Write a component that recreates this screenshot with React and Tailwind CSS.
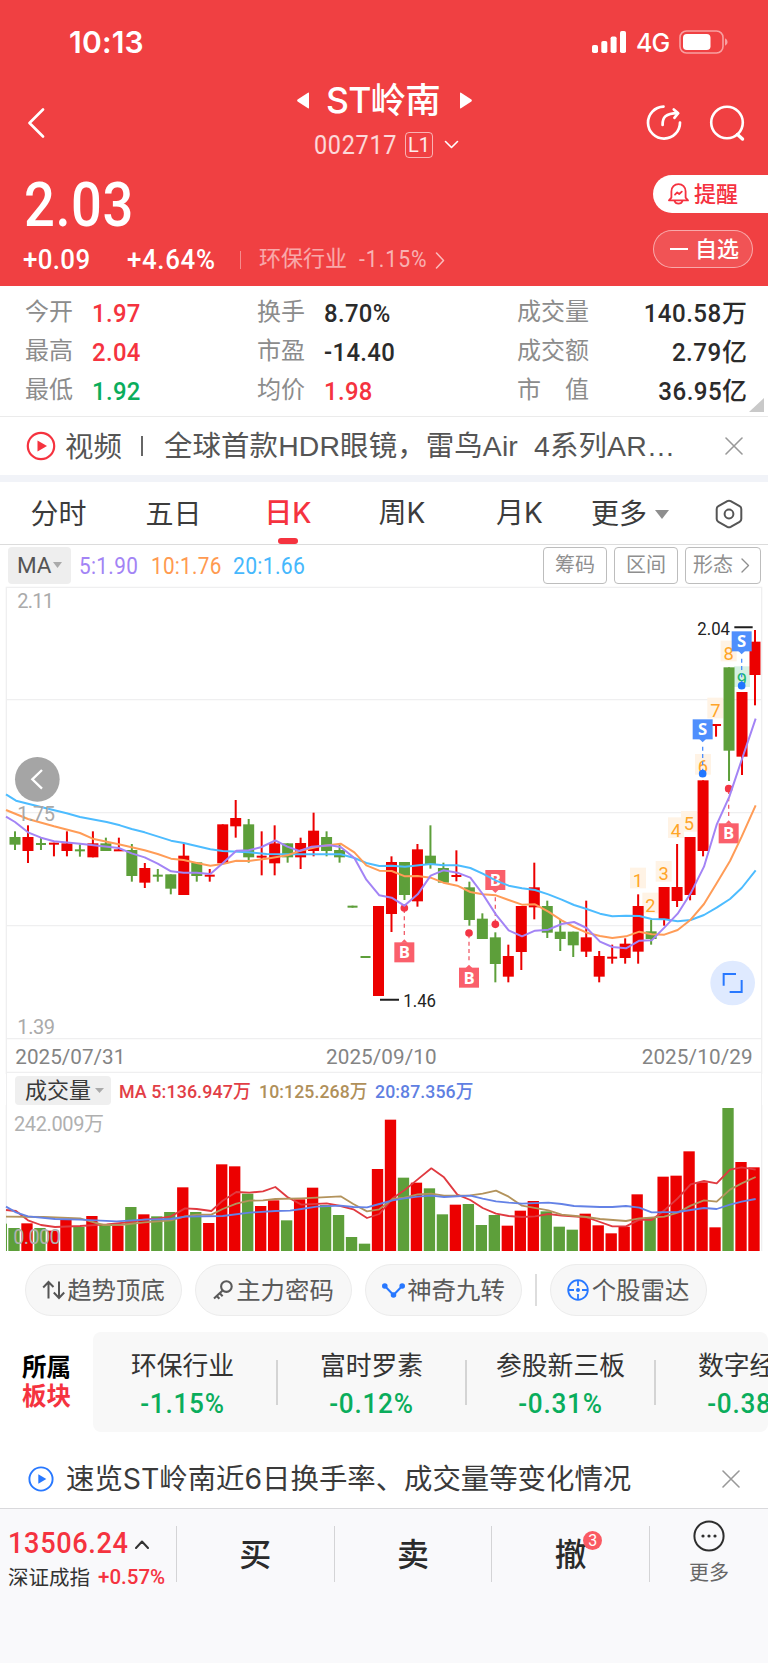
import React from "react";

const NUM = "font-['Roboto','Noto_Sans_CJK_SC',sans-serif]";
const RED = "#ec0000";
const GREEN = "#5d9f3a";

// [color, bodyTop, bodyBottom, high, low]
const CANDLES = [
  ["G", 171, 194, 154, 210], ["R", 171, 213, 136, 249], ["G", 189, 193, 172, 210], ["R", 188, 192, 188, 229],
  ["R", 190, 213, 154, 229], ["G", 208, 212, 193, 230], ["R", 190, 232, 154, 232], ["G", 190, 213, 173, 213],
  ["R", 208, 212, 173, 212], ["G", 210, 288, 192, 305], ["R", 264, 308, 249, 324], ["G", 284, 288, 267, 305],
  ["G", 283, 326, 283, 343], ["R", 227, 345, 192, 345], ["G", 247, 288, 247, 305], ["R", 284, 288, 267, 305],
  ["R", 133, 250, 133, 250], ["R", 114, 139, 60, 173], ["G", 133, 232, 117, 248], ["R", 227, 231, 154, 286],
  ["R", 190, 250, 136, 286], ["G", 190, 232, 190, 248], ["R", 189, 232, 173, 267], ["R", 152, 213, 98, 229],
  ["G", 171, 213, 154, 229], ["G", 210, 232, 193, 248], ["G", 377, 383, 377, 383], ["G", 528, 534, 528, 534],
  ["R", 378, 648, 378, 648], ["R", 246, 402, 229, 456], ["G", 246, 345, 246, 360], ["R", 208, 364, 192, 380],
  ["G", 227, 252, 136, 266], ["G", 264, 308, 248, 308], ["R", 285, 289, 211, 304], ["G", 322, 420, 305, 437],
  ["G", 416, 477, 400, 477], ["G", 472, 552, 457, 607], ["R", 528, 590, 494, 607], ["R", 378, 516, 378, 570],
  ["R", 322, 382, 248, 418], ["G", 378, 458, 362, 474], ["G", 455, 477, 418, 513], ["G", 455, 496, 455, 531],
  ["R", 472, 515, 362, 531], ["R", 528, 590, 513, 607], ["R", 530, 534, 494, 551], ["R", 491, 534, 475, 551],
  ["R", 378, 515, 343, 551], ["G", 454, 477, 419, 494], ["R", 321, 418, 321, 437], ["R", 321, 363, 192, 381],
  ["R", 171, 345, 171, 361], ["R", 1, 213, 1, 229], ["R", -168, -164, -168, -130], ["G", -338, -88, -338, 3],
  ["R", -264, -70, -264, -15], ["R", -415, -315, -450, -224],
];

const VOLUMES = [
  474, 460, 474, 482, 449, 471, 438, 464, 467, 411, 433, 439, 426, 352, 426, 459, 283, 289, 371, 408, 391, 451, 388,
  353, 405, 435, 501, 521, 297, 149, 323, 338, 355, 433, 404, 402, 465, 435, 467, 422, 393, 424, 470, 479, 431, 466,
  490, 470, 373, 442, 320, 317, 244, 337, 472, 114, 276, 292,
];

const MA5 =
  "18,110 45,126 84,157 123,173 162,184 240,191 356,204 395,220 434,232 473,251 513,274 551,278 590,278 631,282 668,250 709,212 746,211 785,201 826,181 862,200 898,213 935,200 990,196 1022,201 1063,234 1099,299 1138,346 1175,353 1213,377 1253,343 1292,287 1330,271 1372,278 1411,293 1448,342 1488,404 1526,451 1566,469 1605,452 1645,449 1685,432 1722,426 1760,444 1800,485 1837,501 1878,505 1918,482 1955,481 1993,443 2033,401 2072,340 2112,260 2150,134 2188,50 2225,-60 2267,-184";
const MA10 =
  "18,90 84,117 162,139 240,159 278,176 356,193 434,211 473,222 513,236 551,240 590,249 631,257 668,252 709,242 746,243 800,236 862,226 898,213 960,199 1022,191 1063,217 1099,256 1138,272 1175,273 1215,289 1253,288 1292,293 1330,308 1372,317 1411,336 1448,343 1488,346 1526,360 1566,374 1605,373 1645,395 1685,421 1722,441 1760,458 1800,468 1837,474 1878,469 1918,455 1955,463 1993,464 2033,450 2072,419 2112,372 2150,310 2190,243 2225,170 2267,76";
const MA20 =
  "18,43 48,62 84,71 123,81 200,100 240,111 320,126 360,136 395,147 434,157 513,182 551,189 631,208 668,213 746,217 800,222 862,223 940,223 1022,223 1063,234 1099,249 1138,258 1175,257 1215,260 1292,252 1330,256 1372,256 1411,264 1448,281 1488,302 1526,317 1566,325 1605,330 1645,343 1685,359 1722,375 1760,387 1800,401 1837,409 1878,407 1918,408 1955,417 1993,418 2033,424 2072,420 2112,405 2150,383 2190,357 2225,324 2267,271";
const V5 =
  "18,420 48,423 84,451 123,465 165,471 240,468 320,463 395,456 434,448 473,446 513,439 555,415 590,417 634,423 668,392 709,366 748,368 789,364 826,351 862,381 904,404 980,400 1022,408 1060,418 1101,444 1138,432 1178,385 1213,361 1253,328 1294,295 1332,322 1372,374 1411,390 1448,414 1488,431 1526,438 1566,441 1605,439 1645,432 1685,437 1760,442 1800,456 1837,469 1878,469 1918,449 1955,450 1993,421 2033,385 2072,343 2112,333 2150,340 2190,299 2225,292 2267,299";
const V10 =
  "18,440 130,441 240,445 310,465 360,465 434,457 513,451 555,439 590,434 634,434 668,417 709,401 748,392 789,391 826,387 904,385 950,383 1022,379 1060,402 1101,424 1138,418 1178,387 1213,383 1253,373 1294,371 1332,377 1411,376 1448,371 1488,362 1526,380 1566,407 1645,421 1685,434 1760,441 1800,447 1878,453 1918,445 1993,440 2033,428 2072,407 2112,391 2150,395 2190,359 2225,340 2267,321";
const V20 =
  "18,410 48,427 84,439 165,447 240,449 350,454 434,449 513,447 555,440 668,438 748,428 826,423 870,422 904,417 950,410 1022,407 1060,411 1101,412 1138,402 1178,391 1213,385 1253,380 1294,377 1332,381 1411,377 1448,386 1488,394 1526,398 1566,401 1645,398 1685,402 1722,408 1800,411 1837,411 1878,408 1918,413 1955,427 2033,426 2072,420 2112,414 2150,417 2190,404 2225,395 2267,387";

const TURNS = [
  ["1", 1914, 294], ["2", 1951, 369], ["3", 1991, 274], ["4", 2028, 143], ["5", 2067, 124],
  ["6", 2109, -47], ["7", 2146, -216], ["8", 2186, -387], ["9", 2226, -310],
];

// x, box centre y, anchor dot y, label
const MARKS = [
  [1213, 517, 384, "B"], [1407, 593, 459, "B"], [1486, 300, 433, "B"],
  [2186, 160, 26, "B"], [2108, -152, -19, "S"], [2225, -416, -283, "S"],
];

function Tri({ className, d = "M0 0H10L5 8Z", viewBox = "0 0 10 8" }) {
  return (
    <svg className={className} viewBox={viewBox} preserveAspectRatio="none" fill="currentColor">
      <path d={d} />
    </svg>
  );
}

function Line({ className, d, viewBox, w = 2 }) {
  return (
    <svg className={className} viewBox={viewBox} fill="none" stroke="currentColor" strokeWidth={w} strokeLinecap="round" strokeLinejoin="round">
      <path d={d} />
    </svg>
  );
}

function Mark({ x, y, dot, label }) {
  const sell = label === "S";
  const s = dot > y ? 1 : -1;
  const fill = sell ? "#4f8ffd" : "#fa5f6b";
  return (
    <g>
      <line x1={x} x2={x} y1={y + s * 52} y2={dot} stroke={sell ? "#4f8ffd" : "#f0606c"} strokeWidth="4" strokeDasharray="12 10" />
      <rect x={x - 30} y={y - 30} width="60" height="60" fill={fill} />
      <path d={`M${x - 10} ${y + s * 29}H${x + 10}L${x} ${y + s * 39}Z`} fill={fill} />
      <circle cx={x} cy={dot} r="11.5" fill={sell ? "#2176ff" : "#f43444"} />
      <text x={x} y={y + 18} fill="#fff" textAnchor="middle" className="font-['Open_Sans',sans-serif] text-[50px] font-bold">{label}</text>
    </g>
  );
}

function PriceChart() {
  return (
    <svg className="block h-[489px] w-full shrink-0" viewBox="0 0 2304 1467">
      <g transform="translate(0 585)">
        <g stroke="#efeff0" strokeWidth="4" fill="none">
          <path d="M19 885V-578H2285V885" />
          <path d="M19 -241H2285M19 98H2285M19 437H2285M19 776H2285M19 877H2285" />
        </g>
        <g fill="#aaaaaa" className="font-['Roboto',sans-serif] text-[60px]">
          <text x="52" y="-517" textLength="110">2.11</text>
          <text x="52" y="762" textLength="113">1.39</text>
        </g>
        <g fill="#848484" className="font-['Roboto',sans-serif] text-[62px]">
          <text x="46" y="852" textLength="330">2025/07/31</text>
          <text x="978" y="852" textLength="332">2025/09/10</text>
          <text x="1925" y="852" textLength="333">2025/10/29</text>
        </g>
        {TURNS.map(([n, x, y]) => (
          <g key={n}>
            <rect x={x - 24} y={y - 31} width="48" height="62" fill={n === "9" ? "#d6f1e3" : "#fff3e5"} />
            <text x={x} y={y + 27} textAnchor="middle" fill={n === "9" ? "#1db66d" : "#ffa528"} className="font-['Roboto',sans-serif] text-[55px]">{n}</text>
          </g>
        ))}
        {CANDLES.map(([c, t, b, h, l], i) => {
          const x = 45 + i * 38.947;
          const thin = b - t < 8;
          const w = thin ? 30 : 33;
          return (
            <g key={i} fill={c === "R" ? RED : GREEN}>
              <rect x={x - 3} y={h} width="6" height={l - h} />
              <rect x={x - w / 2} y={t} width={w} height={Math.max(b - t, 6)} />
            </g>
          );
        })}
        {MARKS.map(([x, y, dot, label]) => (
          <Mark key={`${x}`} x={x} y={y} dot={dot} label={label} />
        ))}
        <g fill="none" strokeWidth="6" strokeLinejoin="round">
          <polyline points={MA20} stroke="#4dbcff" />
          <polyline points={MA10} stroke="#ff9c57" />
          <polyline points={MA5} stroke="#a384f5" />
        </g>
        <text x="52" y="122" textLength="113" fill="#a8a8a8" className="font-['Roboto',sans-serif] text-[60px]">1.75</text>
        <path d="M1140 659H1197M2203 -458H2258" stroke="#1f1f1f" strokeWidth="6" />
        <g fill="#222" className="font-['Roboto',sans-serif] text-[56px]">
          <text x="1210" y="682" textLength="98" lengthAdjust="spacingAndGlyphs">1.46</text>
          <text x="2092" y="-436" textLength="98" lengthAdjust="spacingAndGlyphs">2.04</text>
        </g>
        <circle cx="112" cy="-2" r="67" fill="#a5a5a5" />
        <path d="M126 -30L97 -2L126 26" fill="none" stroke="#fff" strokeWidth="7" />
        <circle cx="2198" cy="609" r="67" fill="#dfeaff" />
        <path d="M2171 617V582H2208M2225 600V636H2189" fill="none" stroke="#2878ff" strokeWidth="6" />
      </g>
    </svg>
  );
}

function VolumeChart() {
  return (
    <svg className="block h-[146px] w-full shrink-0" viewBox="0 105 2304 438">
      <path d="M19 105V543M2285 105V543" stroke="#efeff0" strokeWidth="4" />
      <rect x="18" y="461" width="3" height="82" fill={GREEN} />
      {VOLUMES.map((t, i) => (
        <rect key={i} x={25 + i * 38.947} y={t} width="34" height={543 - t} fill={CANDLES[i][0] === "R" ? RED : GREEN} />
      ))}
      <g fill="none" strokeWidth="5.5" strokeLinejoin="round">
        <polyline points={V5} stroke="#e03a40" />
        <polyline points={V10} stroke="#b3935c" />
        <polyline points={V20} stroke="#6482e6" />
      </g>
      <g fill="#b0b0b0" className="font-['Roboto','Noto_Sans_CJK_SC',sans-serif] text-[60px]">
        <text x="42" y="182" textLength="270">242.009万</text>
        <text x="40" y="523" textLength="142">0.000</text>
      </g>
    </svg>
  );
}

const LABEL = "relative -top-px shrink-0 text-[24px] leading-[39px] text-[#8c8c8c]";
const VALUE = `${NUM} relative top-[2px] text-[26.5px] font-medium leading-[39px]`;

function Stat({ label, value, color = "text-[#2b2b2b]" }) {
  return (
    <div className="flex h-[39px] items-center">
      <span className={`${LABEL} w-[67px]`}>{label}</span>
      <span className={`${VALUE} origin-left scale-x-[0.9] tracking-[0.4px] ${color}`}>{value}</span>
    </div>
  );
}

function StatWide({ label, value, unit }) {
  return (
    <div className="flex h-[39px] items-center">
      <span className={LABEL}>{label}</span>
      <span className={`${VALUE} ml-auto origin-right scale-x-[0.91] tracking-[0.5px] text-[#2b2b2b]`}>{value}</span>
      <span className="relative top-px text-[25px] font-medium leading-[39px] text-[#2b2b2b]">{unit}</span>
    </div>
  );
}

function Header() {
  return (
    <header className="flex h-[286px] shrink-0 flex-col bg-[#f04042] text-white">
      <div className="flex h-[78px] items-center justify-between pl-[69px] pr-[40px] pt-[6px] font-['Inter',sans-serif]">
        <span className="text-[30px] font-semibold leading-none tracking-[0.2px]">10:13</span>
        <div className="flex items-center">
          <svg className="h-[22px] w-[34px]" viewBox="0 0 34 22" fill="currentColor">
            <rect x="0" y="14" width="6" height="8" rx="1.8" />
            <rect x="9.3" y="10" width="6" height="12" rx="1.8" />
            <rect x="18.6" y="5.5" width="6" height="16.5" rx="1.8" />
            <rect x="28" y="0" width="6" height="22" rx="1.8" />
          </svg>
          <span className="relative top-px ml-[10px] w-[33px] text-[25px] font-medium leading-none tracking-[-0.9px]">4G</span>
          <svg className="ml-[10px] h-[24px] w-[49px]" viewBox="0 0 49 24">
            <rect x="1" y="1" width="43" height="22" rx="6.5" fill="none" stroke="#fff" strokeOpacity="0.5" strokeWidth="1.6" />
            <rect x="4" y="4" width="27.5" height="16" rx="3.8" fill="#fff" />
            <path d="M46 8.2V15.8Q48.6 14.8 48.6 12T46 8.2Z" fill="#fff" fillOpacity="0.5" />
          </svg>
        </div>
      </div>

      <div className="grid h-[90px] grid-cols-[200px_1fr_200px] items-center">
        <Line className="ml-[27px] h-[30px] w-[18px]" viewBox="0 0 18 30" d="M16 1.5L2.5 15L16 28.5" w={2.6} />
        <div className="flex flex-col items-center">
          <div className="flex h-[45px] items-center">
            <Tri className="h-[17px] w-[12px]" viewBox="0 0 12 17" d="M11 .8Q12 0 12 1.5V15.5Q12 17 11 16.2L.6 9.4Q-.3 8.5 .6 7.6Z" />
            <h1 className="w-[151px] pr-[2px] text-center text-[35.5px] font-medium leading-[45px] font-['Inter','Noto_Sans_CJK_SC',sans-serif] tracking-[-0.8px]">ST岭南</h1>
            <Tri className="h-[17px] w-[12px]" viewBox="0 0 12 17" d="M1 .8Q0 0 0 1.5V15.5Q0 17 1 16.2L11.4 9.4Q12.3 8.5 11.4 7.6Z" />
          </div>
          <div className="relative -top-px ml-[5px] flex h-[45px] items-center">
            <span className={`${NUM} w-[84px] text-[26px] leading-none text-white/80`}>
              <span className="inline-block origin-left scale-x-[0.9] tracking-[0.8px]">002717</span>
            </span>
            <span className="ml-[7px] flex h-[26px] w-[28px] items-center justify-center rounded-[4px] border border-white/60 font-['Roboto',sans-serif] text-[20px] leading-none text-white/90">L1</span>
            <Line className="ml-[11px] h-[9px] w-[15px]" viewBox="0 0 15 9" d="M1.5 1.5L7.5 7.5L13.5 1.5" w={1.6} />
          </div>
        </div>
        <div className="flex items-center justify-end gap-[25px] pr-[22px]">
          <svg className="h-[38px] w-[38px]" viewBox="0 0 38 38" fill="none" stroke="currentColor" strokeWidth="2.7" strokeLinecap="round" strokeLinejoin="round">
            <path d="M18.5 2.6A16 16 0 1 0 35 18.5" />
            <path d="M17.6 21C17.4 13.5 20.5 9.4 32.5 9.2" />
            <path d="M28.8 5.4L33.2 9.2L29.4 13.8" />
          </svg>
          <svg className="h-[38px] w-[38px]" viewBox="0 0 38 38" fill="none" stroke="currentColor" strokeWidth="2.6" strokeLinecap="round">
            <circle cx="19" cy="18.5" r="15.8" />
            <path d="M29.5 30.5L34.5 35" strokeWidth="3.4" />
          </svg>
        </div>
      </div>

      <div className="flex flex-1 justify-between">
        <div className="pl-[24px]">
          <div className={`${NUM} flex h-[73px] items-center text-[61px] font-medium leading-[73px]`}>
            <span className="relative top-px inline-block origin-left scale-x-[0.89] tracking-[0.6px]">2.03</span>
          </div>
          <div className={`${NUM} flex h-[38px] items-center text-[27.5px] font-medium leading-none`}>
            <span className="-ml-px w-[104px]"><span className="inline-block origin-left scale-x-[0.94] tracking-[0.4px]">+0.09</span></span>
            <span className="w-[113px]"><span className="inline-block origin-left scale-x-[0.94] tracking-[0.7px]">+4.64%</span></span>
            <span className="h-[18px] w-px bg-white/40" />
            <span className="relative -top-px ml-[18px] text-[22px] font-normal text-white/55">环保行业</span>
            <span className="ml-[12px] w-[69px] text-[23.5px] font-normal text-white/60">
              <span className="inline-block origin-left scale-x-[0.9] tracking-[1.1px]">-1.15%</span>
            </span>
            <Line className="ml-[7px] h-[17px] w-[10px] text-white/65" viewBox="0 0 10 17" d="M1.5 1L8.5 8.5L1.5 16" w={1.5} />
          </div>
        </div>
        <div className="flex flex-col gap-[17px] pt-[7px] text-[22px] font-medium leading-none">
          <div className="flex h-[38px] w-[115px] items-center rounded-l-full bg-white pl-[15px] text-[#f5313f]">
            <svg className="h-[22px] w-[21px]" viewBox="0 0 21 22" fill="none" stroke="currentColor" strokeWidth="1.8" strokeLinejoin="round" strokeLinecap="round">
              <path d="M1 17.4H20L17.6 14.6V8.4C17.6 4 14.5 1.2 10.5 1.2S3.4 4 3.4 8.4V14.6Z" />
              <path d="M6.5 17.8C7.6 21.6 13.4 21.6 14.5 17.8" />
              <path d="M7 11.6L9.2 9.4L11.2 11L13.8 8.6" />
            </svg>
            <span className="relative -top-[2px] ml-[5px]">提醒</span>
          </div>
          <div className="flex h-[38px] w-[100px] items-center rounded-full border border-white/50 bg-white/10 pl-[16px]">
            <span className="h-[2px] w-[18px] bg-white" />
            <span className="relative -top-[2px] ml-[7px]">自选</span>
          </div>
        </div>
      </div>
    </header>
  );
}

function SectorCell({ name, value }) {
  return (
    <div className="flex w-[189px] shrink-0 flex-col items-center">
      <span className="whitespace-nowrap text-[25.8px] leading-[42px] text-[#333]">{name}</span>
      <span className={`${NUM} mt-px inline-block scale-x-[0.95] text-[27.5px] font-medium leading-[36px] tracking-[0.8px] text-[#0aad5c]`}>{value}</span>
    </div>
  );
}

const Sep = () => <span className="-mx-[0.75px] mt-[17px] h-[45px] w-[1.5px] shrink-0 bg-[#d4d4d4]" />;

function Pill({ icon, children }) {
  return (
    <div className="flex h-[52px] w-[157px] items-center justify-center rounded-full border border-[#ececec] bg-[#f7f7f7] text-[24.4px] leading-none text-[#5a5a5a]">
      {icon}
      <span className="relative -top-px">{children}</span>
    </div>
  );
}

export default function App() {
  return (
    <div className="flex h-[1663px] w-[768px] flex-col overflow-hidden bg-white font-['Noto_Sans_CJK_SC',sans-serif]">
      <Header />

      <section className="relative flex h-[131px] shrink-0 border-b border-[#ebebeb] pt-[5px]">
        <div className="w-[232px] pl-[25px]">
          <Stat label="今开" value="1.97" color="text-[#f5333f]" />
          <Stat label="最高" value="2.04" color="text-[#f5333f]" />
          <Stat label="最低" value="1.92" color="text-[#0aad5c]" />
        </div>
        <div className="w-[260px] pl-[25px]">
          <Stat label="换手" value="8.70%" />
          <Stat label="市盈" value="-14.40" />
          <Stat label="均价" value="1.98" color="text-[#f5333f]" />
        </div>
        <div className="flex-1 pl-[25px] pr-[21px]">
          <StatWide label="成交量" value="140.58" unit="万" />
          <StatWide label="成交额" value="2.79" unit="亿" />
          <StatWide label="市　值" value="36.95" unit="亿" />
        </div>
        <Tri className="absolute bottom-[4px] right-[4px] h-[14px] w-[15px] text-[#c9c9c9]" viewBox="0 0 15 14" d="M15 0V14H0Z" />
      </section>

      <section className="flex h-[58px] shrink-0 items-center pl-[26px] pr-[25px] text-[28.4px] leading-none text-[#555]">
        <svg className="h-[30px] w-[30px] shrink-0" viewBox="0 0 30 30">
          <circle cx="15" cy="15" r="13.2" fill="none" stroke="#f5333f" strokeWidth="2.2" />
          <path d="M11.5 9.5V20.5L21 15Z" fill="#f5333f" />
        </svg>
        <div className="ml-[9px] flex w-[640px] items-center whitespace-nowrap leading-none">
          <span className="relative -top-px w-[76px]">视频</span>
          <span className="h-[20px] w-[2px] bg-[#666]" />
          <span className="ml-[21px] font-['Liberation_Sans','Noto_Sans_CJK_SC',sans-serif] tracking-[0.15px]">全球首款HDR眼镜，雷鸟Air&nbsp; 4系列AR…</span>
        </div>
        <Line className="ml-auto h-[18px] w-[18px] text-[#999]" viewBox="0 0 18 18" d="M1 1L17 17M17 1L1 17" w={1.6} />
      </section>

      <div className="h-[7px] shrink-0 bg-[#f1f3f8]" />

      <nav className="grid h-[63px] shrink-0 grid-cols-[117px_113px_116px_112px_123px_105px_82px] items-stretch border-b border-[#dcdcdc] text-[28px] leading-[60px] text-[#3c3c3c]">
        <span className="text-center">分时</span>
        <span className="text-center">五日</span>
        <span className="flex flex-col items-center text-[#f5333f]">
          <span className="h-[56px] font-medium font-['Inter','Noto_Sans_CJK_SC',sans-serif] leading-[63px]">日K</span>
          <span className="h-[6px] w-[20px] rounded-[3px] bg-[#f5333f]" />
        </span>
        <span className="text-center font-['Inter','Noto_Sans_CJK_SC',sans-serif] leading-[63px]">周K</span>
        <span className="text-center font-['Inter','Noto_Sans_CJK_SC',sans-serif] leading-[63px]">月K</span>
        <span className="flex items-start pl-[10px]">
          更多
          <Tri className="ml-[8px] mt-[28px] h-[9px] w-[14px] text-[#8e8e8e]" />
        </span>
        <span className="flex items-center pl-[29px]">
          <svg className="h-[30px] w-[28px]" viewBox="0 0 28 30" fill="none" stroke="#555" strokeWidth="2" strokeLinejoin="round">
            <path d="M12.3 2.2Q14 1.3 15.7 2.2L24.6 7.2Q26.3 8.2 26.3 10V20Q26.3 21.8 24.6 22.8L15.7 27.8Q14 28.7 12.3 27.8L3.4 22.8Q1.7 21.8 1.7 20V10Q1.7 8.2 3.4 7.2Z" />
            <circle cx="14" cy="15" r="4.4" />
          </svg>
        </span>
      </nav>

      <div className={`${NUM} flex h-[40px] shrink-0 items-center pl-[8px] pr-[7px] text-[23px] leading-none`}>
        <span className="flex h-[37px] w-[63px] items-center rounded-[4px] bg-[#eeeeee] pl-[9px] text-[22.5px] text-[#555]">
          MA
          <Tri className="ml-px h-[6px] w-[9px] text-[#aaa]" />
        </span>
        <span className="relative top-px ml-[8px] w-[72px] text-[#a384f5]"><span className="inline-block origin-left scale-x-[0.9] tracking-[0.4px]">5:1.90</span></span>
        <span className="relative top-px w-[82px] text-[#ff9a50]"><span className="inline-block origin-left scale-x-[0.9] tracking-[0.3px]">10:1.76</span></span>
        <span className="relative top-px text-[#46b8fd]"><span className="inline-block origin-left scale-x-[0.92] tracking-[0.3px]">20:1.66</span></span>
        <div className="ml-auto flex gap-[7px] text-[20px] text-[#8f8f8f]">
          <span className="flex h-[37px] w-[64px] items-center justify-center rounded-[4px] border-[1.5px] border-[#bdbdbd]">筹码</span>
          <span className="flex h-[37px] w-[64px] items-center justify-center rounded-[4px] border-[1.5px] border-[#bdbdbd]">区间</span>
          <span className="flex h-[37px] w-[76px] items-center rounded-[4px] border-[1.5px] border-[#bdbdbd] pl-[7px]">
            形态
            <Line className="ml-[8px] h-[15px] w-[9px]" viewBox="0 0 9 15" d="M1 1L7.5 7.5L1 14" w={1.4} />
          </span>
        </div>
      </div>

      <PriceChart />

      <div className={`${NUM} mx-[6px] flex h-[31px] shrink-0 items-center border-x border-[#efeff0] pl-[8px] pt-[2px] text-[19px] font-medium leading-none`}>
        <span className="flex h-[29px] w-[96px] items-center rounded-[4px] bg-[#efefef] pl-[10px] text-[22px] font-normal text-[#3a3a3a]">
          成交量
          <Tri className="ml-[4px] h-[5px] w-[9px] text-[#aaa]" />
        </span>
        <span className="relative top-px ml-[8px] w-[140px] whitespace-nowrap text-[#e23e46]"><span className="inline-block origin-left scale-x-[0.94] tracking-[0.1px]">MA 5:136.947万</span></span>
        <span className="relative top-px w-[116px] whitespace-nowrap text-[#b0905a]"><span className="inline-block origin-left scale-x-[0.93] tracking-[0.1px]">10:125.268万</span></span>
        <span className="relative top-px whitespace-nowrap text-[#5f80e2]"><span className="inline-block origin-left scale-x-[0.93] tracking-[0.1px]">20:87.356万</span></span>
      </div>
      <VolumeChart />

      <div className="flex h-[78px] shrink-0 items-center pl-[25px]">
        <Pill
          icon={
            <svg className="mr-[2px] h-[20px] w-[23px]" viewBox="0 0 23 20" fill="none" stroke="#555" strokeWidth="2">
              <path d="M6.5 18.5V2M1.2 7.5L6.5 2L11.5 7M17 1.5V18M11.8 12.5L17 18L22.2 12.5" />
            </svg>
          }
        >
          趋势顶底
        </Pill>
        <span className="w-[13px]" />
        <Pill
          icon={
            <svg className="mr-[3px] h-[20px] w-[20px]" viewBox="0 0 20 20" fill="none" stroke="#5a5a5a" strokeWidth="2.1">
              <circle cx="13.4" cy="6.6" r="5.3" />
              <path d="M9.6 10.4L1 18.6M3.8 16L6.4 18.8M6.8 13.2L9.6 16.2" />
            </svg>
          }
        >
          主力密码
        </Pill>
        <span className="w-[13px]" />
        <Pill
          icon={
            <svg className="mr-[2px] h-[15px] w-[23px]" viewBox="0 0 23 15" fill="#2878ff" stroke="#2878ff" strokeWidth="2">
              <path d="M2.8 3L11.5 12L20.2 3" fill="none" />
              <circle cx="2.8" cy="3" r="1.8" />
              <circle cx="11.5" cy="12" r="1.8" />
              <circle cx="20.2" cy="3" r="1.8" />
            </svg>
          }
        >
          神奇九转
        </Pill>
        <span className="ml-[13px] mr-[13px] h-[32px] w-[1.5px] bg-[#dddddd]" />
        <Pill
          icon={
            <svg className="mr-[3px] h-[22px] w-[22px]" viewBox="0 0 22 22" fill="none" stroke="#2878ff" strokeWidth="1.8">
              <circle cx="11" cy="11" r="9.8" />
              <path d="M11 1V7M11 15V21M1 11H7M15 11H21" />
              <circle cx="11" cy="11" r="2" fill="#2878ff" stroke="none" />
            </svg>
          }
        >
          个股雷达
        </Pill>
      </div>

      <section className="flex h-[103px] shrink-0 pt-[3px]">
        <div className="flex w-[93px] shrink-0 flex-col items-center justify-center pb-[4px] text-[24.5px] font-bold leading-[29px]">
          <span className="text-black">所属</span>
          <span className="text-[#f5333f]">板块</span>
        </div>
        <div className="flex w-[675px] overflow-hidden rounded-[8px] bg-[#f8f8f8]">
          <div className="-ml-[5px] flex w-[900px] shrink-0 pt-[11px]">
            <SectorCell name="环保行业" value="-1.15%" />
            <Sep />
            <SectorCell name="富时罗素" value="-0.12%" />
            <Sep />
            <SectorCell name="参股新三板" value="-0.31%" />
            <Sep />
            <SectorCell name="数字经济" value="-0.38%" />
          </div>
        </div>
      </section>

      <section className="flex h-[77px] shrink-0 items-center border-b border-[#d9d9dc] pl-[28px] pr-[28px] pt-[17px] text-[28.4px] leading-none text-[#3a3a3a]">
        <svg className="h-[26px] w-[26px] shrink-0" viewBox="0 0 26 26">
          <circle cx="13" cy="13" r="11.6" fill="none" stroke="#2878ff" strokeWidth="1.9" />
          <path d="M10.3 8.3V17.7L18.3 13Z" fill="#2878ff" />
        </svg>
        <span className="relative top-px ml-[12px] whitespace-nowrap font-['Inter','Noto_Sans_CJK_SC',sans-serif] leading-none">速览ST岭南近6日换手率、成交量等变化情况</span>
        <Line className="ml-auto h-[18px] w-[18px] text-[#999]" viewBox="0 0 18 18" d="M1 1L17 17M17 1L1 17" w={1.6} />
      </section>

      <footer className="flex flex-1 bg-[#f9f9fb] pt-[17px]">
        <div className="w-[176px] pl-[8px]">
          <div className={`${NUM} flex h-[35px] items-center text-[29.5px] font-medium leading-none text-[#f5333f]`}>
            <span className="w-[120px]"><span className="inline-block origin-left scale-x-[0.92] tracking-[0.7px]">13506.24</span></span>
            <Line className="ml-[7px] h-[10px] w-[14px] text-[#333]" viewBox="0 0 14 10" d="M1 9L7 2.5L13 9" w={2} />
          </div>
          <div className="flex h-[33px] items-center whitespace-nowrap text-[20.5px] leading-none text-[#333]">
            <span className="relative -top-px">深证成指</span>
            <span className={`${NUM} ml-[8px] text-[20.5px] font-medium text-[#f5333f]`}>+0.57%</span>
          </div>
        </div>
        <div className="flex h-[56px] w-[474px] divide-x divide-[#d4d4d6] border-x border-[#d4d4d6] text-[32px] font-medium leading-[53px] text-[#2b2b2b]">
          <span className="flex-1 text-center">买</span>
          <span className="flex-1 text-center">卖</span>
          <span className="relative flex-1 text-center">
            撤
            <span className="absolute left-[91px] top-[5px] flex h-[19px] w-[19px] items-center justify-center rounded-full bg-[#fa5a63] font-['Roboto',sans-serif] text-[16px] font-normal leading-none text-white">3</span>
          </span>
        </div>
        <div className="flex flex-1 flex-col items-center text-[20px] leading-[39px] text-[#666]">
          <svg className="-mt-[6px] h-[32px] w-[32px] shrink-0" viewBox="0 0 32 32">
            <circle cx="16" cy="16" r="14.6" fill="none" stroke="#2e2e2e" strokeWidth="2" />
            <g fill="#2e2e2e">
              <circle cx="10" cy="16" r="1.6" />
              <circle cx="16" cy="16" r="1.6" />
              <circle cx="22" cy="16" r="1.6" />
            </g>
          </svg>
          更多
        </div>
      </footer>
    </div>
  );
}
